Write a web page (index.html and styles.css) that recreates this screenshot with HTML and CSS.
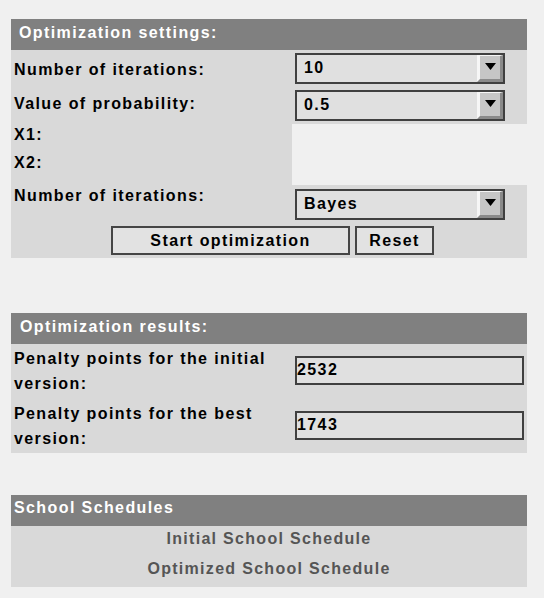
FILE: index.html
```html
<!DOCTYPE html>
<html>
<head>
<meta charset="utf-8">
<title>Optimization</title>
<link rel="stylesheet" href="styles.css">
</head>
<body>
<section class="panel settings">
  <div class="panel-head">Optimization settings:</div>
  <div class="row row-iter">
    <div class="label">Number of iterations:</div>
    <div class="select"><span class="select-value">10</span><span class="select-arrow"><svg width="11" height="7" viewBox="0 0 11 7"><polygon points="0,0 11,0 5.5,7" fill="#000"/></svg></span></div>
  </div>
  <div class="row row-prob">
    <div class="label">Value of probability:</div>
    <div class="select"><span class="select-value">0.5</span><span class="select-arrow"><svg width="11" height="7" viewBox="0 0 11 7"><polygon points="0,0 11,0 5.5,7" fill="#000"/></svg></span></div>
  </div>
  <div class="row row-x">
    <div class="label x-labels">
      <div class="x1">X1:</div>
      <div class="x2">X2:</div>
    </div>
    <div class="x-area"></div>
  </div>
  <div class="row row-method">
    <div class="label">Number of iterations:</div>
    <div class="select"><span class="select-value">Bayes</span><span class="select-arrow"><svg width="11" height="7" viewBox="0 0 11 7"><polygon points="0,0 11,0 5.5,7" fill="#000"/></svg></span></div>
  </div>
  <div class="actions">
    <button class="btn btn-start">Start optimization</button>
    <button class="btn btn-reset">Reset</button>
  </div>
</section>

<section class="panel results">
  <div class="panel-head">Optimization results:</div>
  <div class="result-row result-first">
    <div class="label result-label">Penalty points for the initial version:</div>
    <div class="field">2532</div>
  </div>
  <div class="result-row result-last">
    <div class="label result-label">Penalty points for the best version:</div>
    <div class="field">1743</div>
  </div>
</section>

<section class="panel schedules">
  <div class="panel-head head-tight">School Schedules</div>
  <div class="links">
    <a class="link">Initial School Schedule</a>
    <a class="link">Optimized School Schedule</a>
  </div>
</section>
</body>
</html>
```

FILE: styles.css
```css
html, body {
  margin: 0;
  padding: 0;
  background: #f0f0f0;
}
body {
  font-family: "Liberation Sans", Arial, sans-serif;
  font-weight: bold;
  font-size: 16px;
  letter-spacing: 1.4px;
  color: #000;
  width: 544px;
  height: 598px;
  overflow: hidden;
}
.panel {
  margin-left: 11px;
  width: 516px;
  background: #d9d9d9;
}
.settings {
  margin-top: 19px;
  padding-bottom: 3px;
}
.results {
  margin-top: 55px;
  padding-bottom: 2px;
}
.schedules {
  margin-top: 42px;
  padding-bottom: 1px;
}
.panel-head {
  height: 31px;
  box-sizing: border-box;
  background: #808080;
  color: #fff;
  line-height: 18px;
  padding: 5px 0 0 8px;
}
.results .panel-head {
  padding-left: 9px;
}
.head-tight {
  padding: 4px 0 0 3px;
}
.row {
  display: flex;
  padding-left: 3px;
}
.label {
  width: 281px;
  flex: none;
  line-height: 18px;
}
.row-iter { margin-top: 3px; height: 31px; }
.row-iter .label { padding-top: 8px; }
.row-prob { margin-top: 6px; height: 31px; }
.row-prob .label { padding-top: 5px; }
.row-x { margin-top: 3px; height: 61px; }
.row-method { margin-top: 4px; height: 31px; }
.row-method .label { margin-top: -2px; }
.x-labels { padding-top: 2px; }
.x2 { margin-top: 10px; }
.x-area {
  margin-left: -3px;
  width: 252px;
  flex: none;
  background: #f0f0f0;
}
.select {
  width: 210px;
  height: 31px;
  box-sizing: border-box;
  border: 2px solid #404040;
  background: #e0e0e0;
  display: flex;
}
.select-value {
  flex: 1;
  padding: 4px 0 0 7px;
  line-height: 18px;
}
.select-arrow {
  width: 26px;
  box-sizing: border-box;
  border-left: 3px solid #f6f6f6;
  border-top: 1px solid #f6f6f6;
  border-right: 3px solid #8a8a8a;
  border-bottom: 3px solid #8a8a8a;
  background: #c6c6c6;
  display: flex;
  align-items: center;
  justify-content: center;
}
.select-arrow svg {
  display: block;
  margin-top: -2px;
}
.actions {
  margin-top: 6px;
  height: 29px;
  display: flex;
  justify-content: center;
  gap: 5px;
  padding-left: 7px;
}
.btn {
  font: inherit;
  letter-spacing: inherit;
  color: #000;
  height: 29px;
  box-sizing: border-box;
  border: 2px solid #454545;
  background: #e2e2e2;
  padding: 0;
  line-height: 18px;
  margin: 0;
}
.btn-start { width: 239px; }
.btn-reset { width: 79px; }
.result-row {
  display: flex;
  padding-left: 3px;
}
.result-first {
  margin-top: 2px;
  height: 55px;
}
.result-last {
  height: 50px;
}
.result-label {
  line-height: 25px;
}
.field {
  margin-top: 10px;
  width: 229px;
  height: 29px;
  box-sizing: border-box;
  border: 2px solid #404040;
  background: #e0e0e0;
  padding: 3px 0 0 0;
  line-height: 18px;
}
.links {
  display: flex;
  flex-direction: column;
  align-items: center;
}
.link {
  display: block;
  color: #555;
  line-height: 26px;
  padding-bottom: 4px;
  text-decoration: none;
  letter-spacing: 1.3px;
}
```
